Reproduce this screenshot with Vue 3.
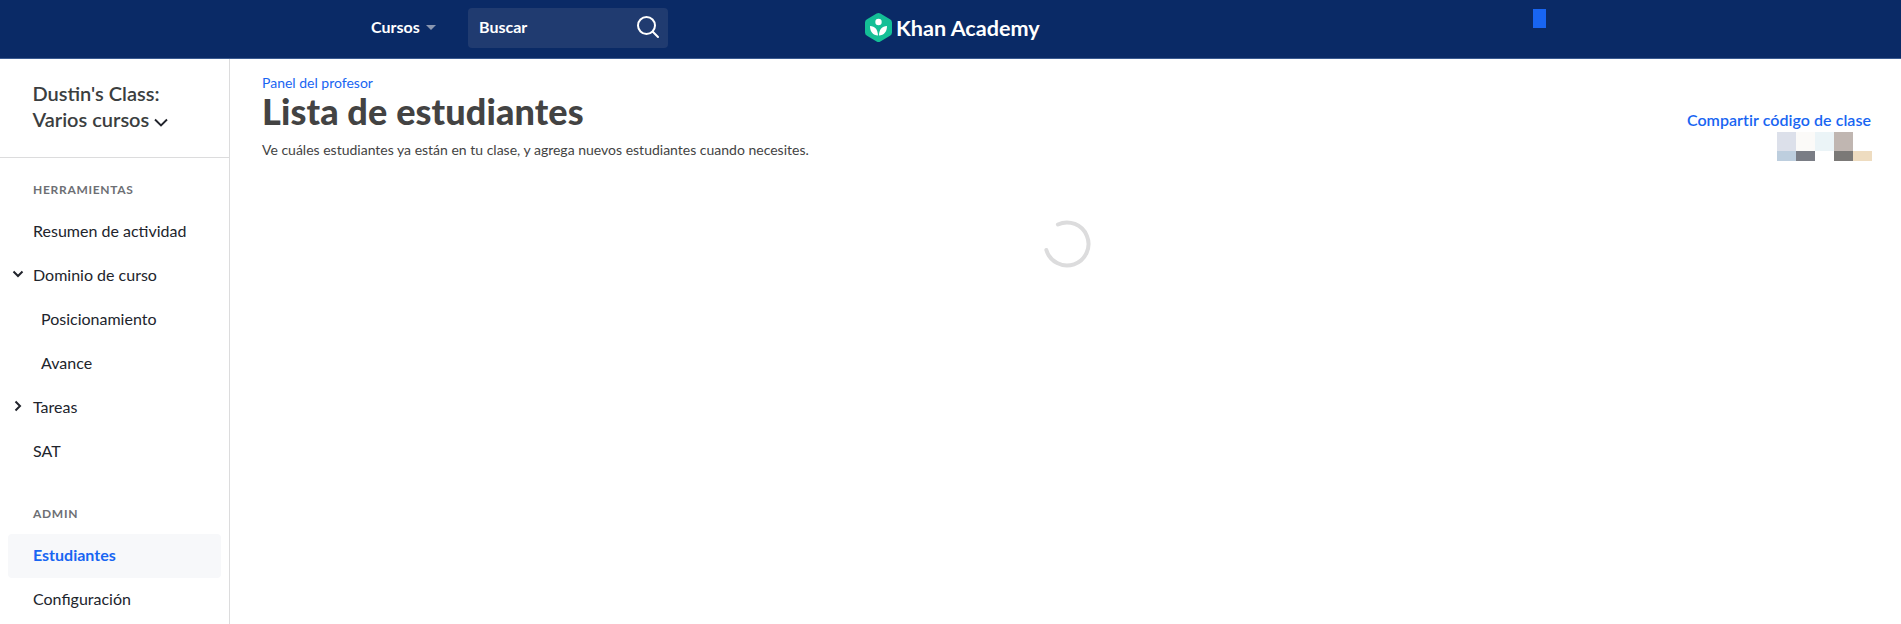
<script setup>
const tools = [
  { label: 'Resumen de actividad' },
  { label: 'Dominio de curso', caret: 'down' },
  { label: 'Posicionamiento', sub: true },
  { label: 'Avance', sub: true },
  { label: 'Tareas', caret: 'right' },
  { label: 'SAT' }
]
const admin = [
  { label: 'Estudiantes', active: true },
  { label: 'Configuración' }
]
const pixels = ['#dce0ea', '#fbfaf8', '#ebf4f7', '#c0b6b1', '#ffffff', '#bdcede', '#7a7d85', '#ffffff', '#7b7977', '#eedcc0']
</script>

<template>
  <div class="page">
    <header class="topbar">
      <button class="courses">Cursos <span class="tri"></span></button>
      <div class="search">
        <span class="search-label">Buscar</span>
        <svg class="search-icon" width="24" height="24" viewBox="0 0 24 24" fill="none" stroke="#fff" stroke-width="2" stroke-linecap="round">
          <circle cx="10.5" cy="10.5" r="8.5" />
          <path d="M16.8 16.8L22 22" />
        </svg>
      </div>
      <div class="logo">
        <svg width="27" height="29" viewBox="0 0 27 29">
          <path d="M11.600 .6a4 4 0 0 1 3.800 0l9.600 5.600a3.600 3.600 0 0 1 2 3.200v10.200a3.600 3.600 0 0 1-2 3.200l-9.600 5.600a4 4 0 0 1-3.800 0L2 22.800a3.600 3.600 0 0 1-2-3.200V9.400a3.600 3.600 0 0 1 2-3.200z" fill="#14bf96" />
          <circle cx="13.500" cy="9" r="3.200" fill="#fff" />
          <path d="M5 13c5 .2 7.800 3.200 8 9.500-5-.3-8-3.700-8-9.500zM22 13c-5 .2-7.800 3.200-8 9.500 5-.3 8-3.700 8-9.500z" fill="#fff" />
        </svg>
        <span>Khan Academy</span>
      </div>
      <div class="marker"></div>
    </header>

    <div class="body">
      <aside class="sidebar">
        <div class="class-title">
          Dustin's Class:<br />
          Varios cursos
          <svg class="title-caret" width="14" height="9" viewBox="0 0 14 9" fill="none" stroke="#21242c" stroke-width="1.900">
            <path d="M1 1.500l6 6 6-6" />
          </svg>
        </div>
        <nav class="nav">
          <div class="heading">HERRAMIENTAS</div>
          <div v-for="item in tools" :key="item.label" class="item" :class="{ sub: item.sub }">
            <svg v-if="item.caret === 'down'" class="caret" width="12" height="8" viewBox="0 0 12 8" fill="none" stroke="#21242c" stroke-width="2">
              <path d="M1.500 1.500L6 6l4.500-4.500" />
            </svg>
            <svg v-if="item.caret === 'right'" class="caret right" width="8" height="12" viewBox="0 0 8 12" fill="none" stroke="#21242c" stroke-width="2">
              <path d="M1.500 1.500L6 6l-4.500 4.500" />
            </svg>
            {{ item.label }}
          </div>
          <div class="heading admin">ADMIN</div>
          <div v-for="item in admin" :key="item.label" class="item lifted" :class="{ active: item.active }">{{ item.label }}</div>
        </nav>
      </aside>

      <main class="main">
        <div class="head">
          <div>
            <a class="crumb">Panel del profesor</a>
            <h1>Lista de estudiantes</h1>
            <p>Ve cuáles estudiantes ya están en tu clase, y agrega nuevos estudiantes cuando necesites.</p>
          </div>
          <div class="share">
            <a>Compartir código de clase</a>
            <div class="pixels">
              <i v-for="(c, i) in pixels" :key="i" :style="{ background: c }"></i>
            </div>
          </div>
        </div>
        <div class="spinner-wrap">
          <svg width="48" height="48" viewBox="0 0 48 48" fill="none" stroke="#dcdcdd" stroke-width="4" stroke-linecap="round">
            <path d="M14.900 4.500A21.500 21.500 0 1 1 3.350 30" />
          </svg>
        </div>
      </main>
    </div>
  </div>
</template>

<style>
html, body { margin: 0; background: #fff; overflow: hidden; }
</style>

<style scoped>
.page {
  width: 1901px;
  height: 624px;
  display: flex;
  flex-direction: column;
  overflow: hidden;
  font-family: Lato, "Noto Sans", sans-serif;
  color: #21242c;
}
.topbar {
  height: 58px;
  flex: none;
  box-sizing: content-box;
  background: #0a2a66;
  border-bottom: 1px solid #3b5a8f;
  display: flex;
  align-items: center;
}
.courses {
  margin-left: 371px;
  margin-top: -5px;
  padding: 0;
  border: 0;
  background: none;
  color: #fff;
  font: 700 16px Lato, sans-serif;
  display: flex;
  align-items: center;
  gap: 6px;
  width: 97px;
}
.tri {
  width: 0;
  height: 0;
  border-left: 5px solid transparent;
  border-right: 5px solid transparent;
  border-top: 5px solid #8a97b1;
  margin-top: 2px;
}
.search {
  width: 200px;
  height: 40px;
  margin-top: -2px;
  box-sizing: border-box;
  padding: 0 8px 0 11px;
  background: #203b70;
  border-radius: 4px;
  color: #fff;
  font-weight: 700;
  font-size: 16px;
  display: flex;
  align-items: center;
  justify-content: space-between;
}
.search-label { margin-top: -4px; }
.search-icon { margin-top: -2px; }
.logo {
  margin-left: 197px;
  width: 175px;
  margin-top: -3px;
  display: flex;
  align-items: center;
  gap: 4px;
  color: #fff;
  font-size: 21.600px;
  font-weight: 700;
  white-space: nowrap;
}
.logo svg { flex: none; }
.marker {
  width: 13px;
  height: 19px;
  margin-left: 493px;
  margin-bottom: 21px;
  background: #1865f2;
}
.body {
  flex: 1;
  display: flex;
  min-height: 0;
}
.sidebar {
  width: 230px;
  flex: none;
  box-sizing: border-box;
  border-right: 1px solid #dcdcdd;
}
.class-title {
  height: 99px;
  box-sizing: border-box;
  padding: 21px 0 0 32.500px;
  font-size: 20px;
  font-weight: 600;
  line-height: 26px;
  color: #3b3e40;
  border-bottom: 1px solid #dcdcdd;
  margin-right: -1px;
}
.title-caret { margin-left: 0; }
.nav { padding: 22px 8px 0; }
.heading {
  padding-left: 25px;
  font-size: 12px;
  font-weight: 700;
  line-height: 20px;
  letter-spacing: .7px;
  color: #6d6f74;
  margin-bottom: 8px;
}
.heading.admin { margin-top: 32px; margin-bottom: 10px; }
.item {
  height: 44px;
  box-sizing: border-box;
  position: relative;
  display: flex;
  align-items: center;
  padding-left: 25px;
  font-size: 16px;
  color: #21242c;
  border-radius: 4px;
}
.item.lifted { padding-bottom: 4px; }
.item.sub { padding-left: 33px; }
.item.active {
  background: #f7f8fa;
  color: #1865f2;
  font-weight: 700;
}
.caret {
  position: absolute;
  left: 4px;
  top: 18px;
}
.caret.right { left: 6px; top: 16px; }
.main {
  flex: 1;
  min-width: 0;
  padding: 15px 30px 0 32px;
}
.head {
  display: flex;
  justify-content: space-between;
}
.crumb {
  display: block;
  color: #1865f2;
  font-size: 14px;
  line-height: 18px;
}
h1 {
  margin: -1px 0 0;
  font-size: 36px;
  line-height: 40px;
  font-weight: 900;
  letter-spacing: .12px;
  color: #434343;
}
p {
  margin: 9px 0 0;
  font-size: 14px;
  line-height: 20px;
  color: #434343;
}
.share {
  display: flex;
  flex-direction: column;
  align-items: flex-end;
  padding-top: 36px;
}
.share a {
  color: #1865f2;
  font-size: 16px;
  font-weight: 600;
  letter-spacing: .05px;
  line-height: 20px;
}
.pixels {
  width: 95px;
  display: grid;
  grid-template-columns: repeat(5, 19px);
  grid-template-rows: 19px 10px;
  margin: 2px -1px 0 0;
}
.spinner-wrap {
  display: flex;
  justify-content: center;
  margin: 59px 0 0 1px;
}
</style>
